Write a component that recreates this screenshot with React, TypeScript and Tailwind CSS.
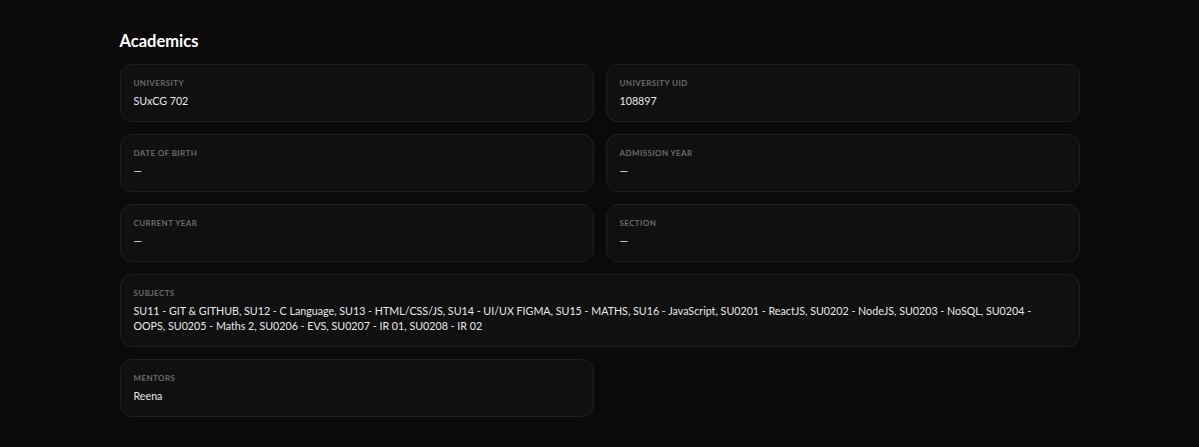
import React from 'react';

interface Field {
  label: string;
  value: string;
  wide?: boolean;
}

const fields: Field[] = [
  { label: 'University', value: 'SUxCG 702' },
  { label: 'University UID', value: '108897' },
  { label: 'Date of Birth', value: '—' },
  { label: 'Admission Year', value: '—' },
  { label: 'Current Year', value: '—' },
  { label: 'Section', value: '—' },
  {
    label: 'Subjects',
    value:
      'SU11 - GIT & GITHUB, SU12 - C Language, SU13 - HTML/CSS/JS, SU14 - UI/UX FIGMA, SU15 - MATHS, SU16 - JavaScript, SU0201 - ReactJS, SU0202 - NodeJS, SU0203 - NoSQL, SU0204 - OOPS, SU0205 - Maths 2, SU0206 - EVS, SU0207 - IR 01, SU0208 - IR 02',
    wide: true,
  },
  { label: 'Mentors', value: 'Reena' },
];

const InfoCard: React.FC<{ field: Field }> = ({ field }) => (
  <div
    className={`bg-[#101010] border border-[#1f1f1f] rounded-xl px-[13px] pt-3 pb-[13px] ${field.wide ? 'col-span-2' : ''}`}
  >
    <div className="text-[8px] leading-3 font-bold uppercase tracking-[0.05em] text-[#6b6b6b]">
      {field.label}
    </div>
    <div className="mt-1 text-[10.7px] leading-[15px] text-[#e8e8e8]">{field.value}</div>
  </div>
);

export default function App() {
  return (
    <div className="min-h-screen bg-[#0a0a0a] font-['Lato','Noto_Sans',sans-serif] pt-[29px] pb-8">
      <div className="max-w-[960px] mx-auto">
        <h2 className="text-[16.5px] leading-6 font-bold text-white mb-[11px]">Academics</h2>
        <div className="grid grid-cols-2 gap-3">
          {fields.map(f => (
            <InfoCard key={f.label} field={f} />
          ))}
        </div>
      </div>
    </div>
  );
}
